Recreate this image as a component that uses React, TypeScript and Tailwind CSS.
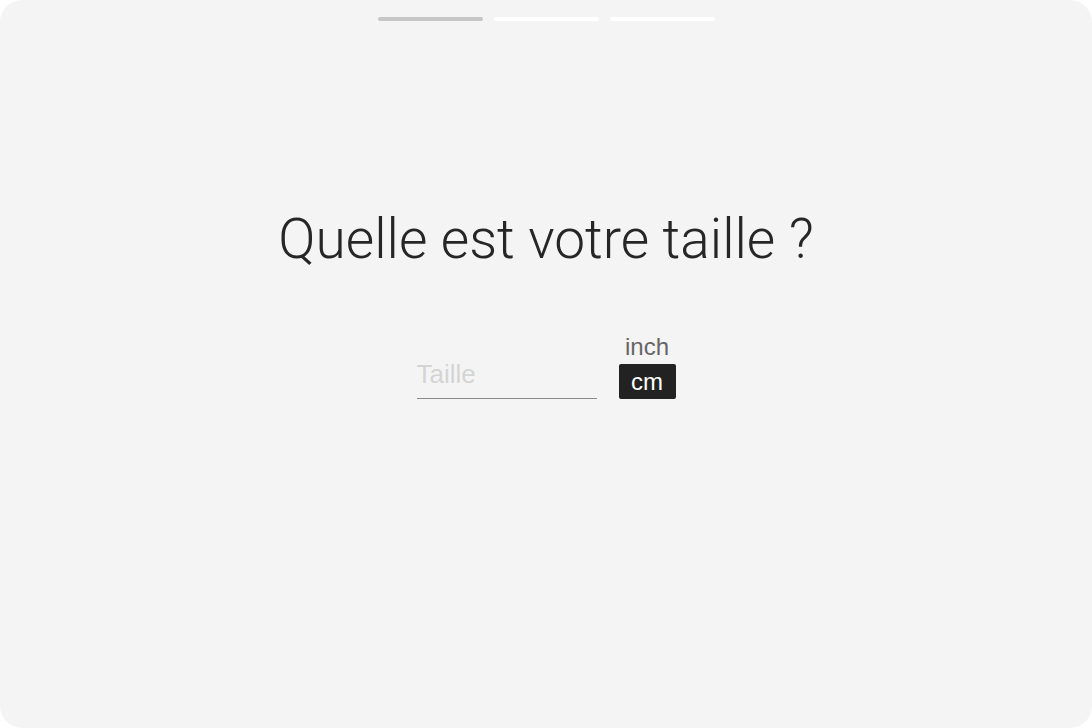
import React, { useState } from 'react';

const steps = [true, false, false];

export default function App() {
  const [unit, setUnit] = useState<'inch' | 'cm'>('cm');

  return (
    <div className="h-[728px] w-[1092px] bg-white" style={{ fontFamily: '"Liberation Sans", Arial, sans-serif' }}>
      <div className="flex h-full w-full flex-col items-center rounded-[22px] bg-[#f4f4f4]">
        <div className="flex gap-[11px] pt-[17px]">
          {steps.map((done, i) => (
            <div
              key={i}
              className={done ? 'h-[4px] w-[105px] rounded-full bg-[#c6c6c6]' : 'h-[4px] w-[105px] rounded-full bg-white'}
            />
          ))}
        </div>

        <h1
          className="mt-[191px] text-[55px] leading-none font-light text-[#262626]"
          style={{ fontFamily: 'Roboto, "Liberation Sans", sans-serif' }}
        >
          Quelle est votre taille ?
        </h1>

        <div className="mt-[67px] flex items-end gap-[22px]">
          <input
            type="text"
            placeholder="Taille"
            className="h-[40px] w-[180px] border-b border-[#8a8a8a] bg-transparent pb-[8px] text-[26px] text-[#262626] outline-none placeholder:text-[#d4d4d4]"
          />
          <div className="flex flex-col items-center">
            <button
              onClick={() => setUnit('inch')}
              className={
                unit === 'inch'
                  ? 'mb-[4px] h-[26px] w-[57px] rounded-[2px] bg-[#222] text-[24px] leading-none text-white'
                  : 'mb-[4px] h-[26px] w-[57px] text-[24px] leading-none text-[#666]'
              }
            >
              inch
            </button>
            <button
              onClick={() => setUnit('cm')}
              className={
                unit === 'cm'
                  ? 'h-[35px] w-[57px] rounded-[2px] bg-[#222] text-[24px] leading-none text-white'
                  : 'h-[35px] w-[57px] text-[24px] leading-none text-[#666]'
              }
            >
              cm
            </button>
          </div>
        </div>
      </div>
    </div>
  );
}
